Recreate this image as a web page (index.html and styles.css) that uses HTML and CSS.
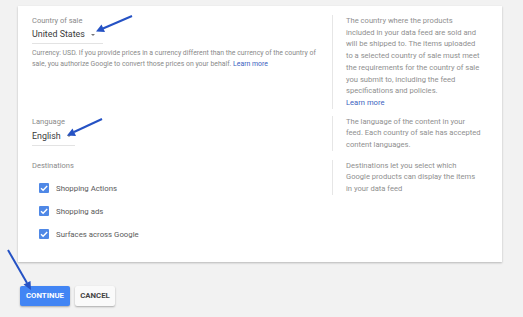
FILE: index.html
```html
<!DOCTYPE html>
<html lang="en">
<head>
  <meta charset="UTF-8">
  <meta name="viewport" content="width=device-width, initial-scale=1.0">
  <link rel="stylesheet" href="styles.css">
  <title>Feed settings</title>
</head>
<body>
  <div class="settings-card">
    <div class="settings-row row-country">
      <div class="field">
        <div class="field-label">Country of sale</div>
        <div class="select select-country"><span class="select-value">United States</span><span class="caret"></span></div>
        <p class="helper">Currency: USD. If you provide prices in a currency different than the currency of the country of sale, you authorize Google to convert those prices on your behalf. <a href="#">Learn more</a></p>
      </div>
      <div class="hint">The country where the products included in your data feed are sold and will be shipped to. The items uploaded to a selected country of sale must meet the requirements for the country of sale you submit to, including the feed specifications and policies.<br><a href="#">Learn more</a></div>
    </div>

    <div class="settings-row row-language">
      <div class="field">
        <div class="field-label">Language</div>
        <div class="select select-language"><span class="select-value">English</span><span class="caret"></span></div>
      </div>
      <div class="hint">The language of the content in your feed. Each country of sale has accepted content languages.</div>
    </div>

    <div class="settings-row row-destinations">
      <div class="field">
        <div class="field-label">Destinations</div>
        <ul class="checklist">
          <li><span class="checkbox"><svg viewBox="0 0 10 10"><path d="M2 5.2 L4.1 7.2 L8.2 2.9" /></svg></span>Shopping Actions</li>
          <li><span class="checkbox"><svg viewBox="0 0 10 10"><path d="M2 5.2 L4.1 7.2 L8.2 2.9" /></svg></span>Shopping ads</li>
          <li><span class="checkbox"><svg viewBox="0 0 10 10"><path d="M2 5.2 L4.1 7.2 L8.2 2.9" /></svg></span>Surfaces across Google</li>
        </ul>
      </div>
      <div class="hint">Destinations let you select which Google products can display the items in your data feed</div>
    </div>
  </div>

  <div class="actions">
    <button class="btn btn-primary">CONTINUE</button>
    <button class="btn btn-flat">CANCEL</button>
  </div>

  <!-- annotation arrows drawn over the screenshot -->
  <svg class="arrows" width="523" height="317" viewBox="0 0 523 317">
    <line x1="132" y1="16" x2="103" y2="28.5" />
    <polygon points="96,31.5 101.5,24.5 105,32" />
    <line x1="102" y1="119" x2="74" y2="132" />
    <polygon points="67,135.5 72.5,128.5 76,136" />
    <line x1="8" y1="250" x2="27" y2="283" />
    <polygon points="31,290 23.5,284.5 30.5,281" />
  </svg>
</body>
</html>
```

FILE: styles.css
```css
body {
  margin: 0;
  padding: 6px 21px 0 18px;
  height: 317px;
  box-sizing: border-box;
  font-family: Roboto, 'Noto Sans', Arial, sans-serif;
  background-color: #f2f2f2;
  color: #333;
  position: relative;
  overflow: hidden;
}

a {
  color: #3b5fc0;
  text-decoration: none;
}

.settings-card {
  width: 484px;
  box-sizing: border-box;
  background-color: #fff;
  padding: 9px 0 16px 14px;
  box-shadow: 0 1px 2px rgba(0, 0, 0, 0.25);
}

.settings-row {
  display: grid;
  grid-template-columns: 300px 1fr;
  align-items: start;
}

.row-language {
  margin-top: 7px;
}

.row-destinations {
  margin-top: 9px;
}

.field-label {
  font-size: 7.5px;
  line-height: 9px;
  color: #8a8a8a;
  padding-top: 1px;
}

.select {
  display: flex;
  align-items: center;
  width: max-content;
  gap: 6px;
  font-size: 8.9px;
  line-height: 12px;
  color: #3a3a3a;
  border-bottom: 1px solid #e3e3e3;
  padding-bottom: 3px;
}

.select-value {
  white-space: nowrap;
}

.select-country {
  margin-top: 3px;
  padding-right: 8px;
}

.select-language {
  margin-top: 4px;
  padding-right: 4px;
}

.caret {
  width: 0;
  height: 0;
  border-left: 2.5px solid transparent;
  border-right: 2.5px solid transparent;
  border-top: 2.5px solid #777;
  margin-top: 1px;
}

.helper {
  margin: 4px 0 0;
  font-size: 6.9px;
  line-height: 11px;
  color: #8a8a8a;
  padding-right: 6px;
}

.hint {
  border-left: 1px solid #e6e6e6;
  padding-left: 13px;
  padding-right: 20px;
  font-size: 7.6px;
  line-height: 11.7px;
  color: #8f8f8f;
}

.checklist {
  list-style: none;
  margin: 7px 0 0;
  padding: 0;
}

.checklist li {
  display: flex;
  align-items: center;
  height: 23px;
  padding-left: 7px;
  font-size: 7.8px;
  color: #5a5a5a;
}

.checkbox {
  width: 10px;
  height: 10px;
  border-radius: 1px;
  background-color: #4f88e6;
  margin-right: 7px;
  display: flex;
}

.checkbox svg {
  width: 10px;
  height: 10px;
  fill: none;
  stroke: #fff;
  stroke-width: 1.4;
}

.actions {
  display: flex;
  gap: 5px;
  margin-top: 24px;
  padding-left: 2px;
}

.btn {
  height: 20px;
  border: none;
  border-radius: 2px;
  font-family: Roboto, Arial, sans-serif;
  font-size: 7.8px;
  font-weight: bold;
  padding: 0;
  cursor: pointer;
}

.btn-primary {
  width: 50px;
  background-color: #4285f4;
  color: #fff;
  box-shadow: 0 1px 2px rgba(0, 0, 0, 0.3);
}

.btn-flat {
  width: 40px;
  background-color: #fafafa;
  color: #444;
  box-shadow: 0 1px 2px rgba(0, 0, 0, 0.3);
}

.arrows {
  position: absolute;
  left: 0;
  top: 0;
  pointer-events: none;
}

.arrows line {
  stroke: #2552c4;
  stroke-width: 2;
}

.arrows polygon {
  fill: #2552c4;
}
```
